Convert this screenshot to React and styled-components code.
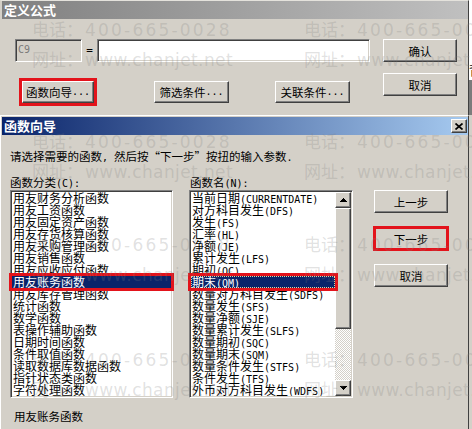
import React from "react";
import styled, { createGlobalStyle, css } from "styled-components";

const CJK = `"Noto Sans CJK SC", "Noto Sans", sans-serif`;
const MONO = `"DejaVu Sans Mono", "Liberation Mono", monospace`;
const FACE = "#d4d0c8";
const NAVY = "#0a246a";
const RED = "#e3131b";

const GlobalStyle = createGlobalStyle`
  html, body { margin: 0; padding: 0; background: ${FACE}; }
  body { font-family: ${CJK}; font-size: 12px; color: #000; }
  * { box-sizing: border-box; }
`;

// classic 3d edges
const raised = css`
  background: ${FACE};
  border: 1px solid;
  border-color: #fff #404040 #404040 #fff;
  box-shadow: inset -1px -1px #808080, inset 1px 1px ${FACE};
`;

const sunken = css`
  border: 1px solid;
  border-color: #808080 #fff #fff #808080;
  box-shadow: inset 1px 1px #404040, inset -1px -1px ${FACE};
  padding: 1px;
`;

const Screen = styled.div`
  position: relative;
  width: 472px;
  height: 429px;
  overflow: hidden;
  display: flex;
  background: ${FACE};
`;

const Stack = styled.div`
  width: 469px;
  flex: none;
  display: flex;
  flex-direction: column;
`;

const Edge = styled.div`
  flex: 1;
  display: flex;
  flex-direction: column;
  overflow: hidden;
`;

const EdgePart = styled.div`
  height: ${({ $h }) => ($h ? `${$h}px` : "auto")};
  flex: ${({ $h }) => ($h ? "none" : 1)};
  background: ${({ $bg }) => $bg};
  font-size: 13px;
  line-height: 20px;
  white-space: nowrap;
`;

const Window = styled.section`
  display: flex;
  flex-direction: column;
  background: ${FACE};
  border-left: 1px solid ${({ $active }) => ($active ? "#fff" : FACE)};
  border-right: 1px solid #404040;
  border-top: 1px solid ${({ $active }) => ($active ? "#fff" : "#e4e2dc")};
  padding: ${({ $active }) => ($active ? "1px" : "0")} 0 0 1px;
  height: ${({ $height }) => ($height ? `${$height}px` : "auto")};
  flex: ${({ $height }) => ($height ? "none" : 1)};
`;

const TitleBar = styled.header`
  height: 18px;
  flex: none;
  display: flex;
  align-items: center;
  justify-content: space-between;
  padding: 0 1px 0 2px;
  background: ${({ $active }) =>
    $active
      ? "linear-gradient(90deg, #0a246a 0%, #a6caf0 100%)"
      : "linear-gradient(90deg, #808080 0%, #c0c0c0 100%)"};
  color: #fff;
  font-weight: bold;
  font-size: 13px;
  line-height: 18px;
`;

const CloseButton = styled.div`
  ${raised}
  width: 16px;
  height: 14px;
  display: flex;
  align-items: center;
  justify-content: center;
`;

const Latin = styled.span`
  font-family: ${MONO};
  font-size: 10px;
`;

const Button = styled.button`
  ${raised}
  width: ${({ $w }) => $w || 74}px;
  height: ${({ $h }) => $h || 23}px;
  margin-left: ${({ $ml }) => $ml || 0}px;
  padding: 0;
  display: flex;
  align-items: center;
  justify-content: center;
  font-family: ${CJK};
  font-size: 11.5px;
  line-height: 12px;
  color: #000;
  white-space: nowrap;
  ${({ $mark }) =>
    $mark !== undefined &&
    css`
      outline: 3px solid ${RED};
      outline-offset: ${$mark}px;
    `}
`;

/* ---------- outer dialog ---------- */

const FormulaBody = styled.div`
  flex: 1;
  display: grid;
  grid-template-columns: 381px 74px;
  padding-top: 20px;
`;

const FormulaLeft = styled.div`
  display: flex;
  flex-direction: column;
  gap: 20px;
  padding-left: 13px;
`;

const FieldRow = styled.div`
  display: flex;
  align-items: center;
  height: 23px;
`;

const Field = styled.div`
  ${sunken}
  width: ${({ $w }) => $w}px;
  height: 23px;
  background: ${({ $disabled }) => ($disabled ? FACE : "#fff")};
  color: #7a7a7a;
  padding: 2px 0 0 2px;
  line-height: 12px;
`;

const Equals = styled(Latin)`
  width: 15px;
  text-align: center;
  font-size: 11px;
`;

const ButtonRow = styled.div`
  display: flex;
  margin-top: -1px;
`;

const ButtonStack = styled.div`
  display: flex;
  flex-direction: column;
  gap: ${({ $gap }) => $gap}px;
  padding-left: ${({ $pad }) => $pad || 0}px;
`;

/* ---------- wizard ---------- */

const WizardBody = styled.div`
  flex: 1;
  padding: 15px 0 0 8px;
  font-size: 11.5px;
`;

const Text = styled.div`
  height: 12px;
  line-height: 12px;
  white-space: nowrap;
  padding-left: ${({ $pad }) => $pad || 0}px;
`;

const Picker = styled.div`
  margin-top: 14px;
  display: grid;
  grid-template-columns: 163px 164px 79px;
  grid-template-rows: 12px 208px;
  column-gap: 16px;
  row-gap: 2px;
  margin-bottom: 12px;
`;

const ListBox = styled.div`
  ${sunken}
  background: #fff;
  display: flex;
  height: 208px;
`;

const Items = styled.div`
  flex: 1;
  min-width: 0;
  clip-path: inset(-4px -4px 0 -4px);
`;

const Row = styled.div`
  height: 12px;
  line-height: 12px;
  padding-left: 1px;
  font-size: 12px;
  white-space: nowrap;
  ${({ $selected }) =>
    $selected &&
    css`
      background: ${NAVY};
      color: #fff;
    `}
  ${({ $focused }) =>
    $focused &&
    css`
      border: 1px dotted #d8d8a8;
      line-height: 10px;
      padding-left: 0;
    `}
  ${({ $marked }) =>
    $marked &&
    css`
      outline: 3px solid ${RED};
    `}
`;

const ScrollBar = styled.div`
  width: 16px;
  flex: none;
  display: flex;
  flex-direction: column;
`;

const ArrowButton = styled.div`
  ${raised}
  height: 16px;
  flex: none;
  display: flex;
  align-items: center;
  justify-content: center;
`;

const Thumb = styled.div`
  ${raised}
  height: ${({ $size }) => $size}px;
  flex: none;
`;

const Track = styled.div`
  flex: 1;
  background: repeating-conic-gradient(#fff 0 25%, ${FACE} 0 50%) 0 0 / 2px 2px;
`;

const RightColumn = styled(ButtonStack)`
  grid-column: 3;
  grid-row: 2;
`;

/* ---------- watermark overlay ---------- */

const Watermark = styled.div`
  position: absolute;
  inset: 0;
  pointer-events: none;
  z-index: 5;
`;

const Mark = styled.div`
  position: absolute;
  left: ${({ $x }) => $x}px;
  top: ${({ $y }) => $y}px;
  color: rgba(126, 126, 126, 0.23);
  font-family: "DejaVu Sans", ${CJK};
  font-size: 17px;
  line-height: 30px;
  white-space: nowrap;
`;

const Spaced = styled.span`
  margin-left: 2px;
  letter-spacing: ${({ $ls }) => $ls}px;
`;

const categories = [
  "用友财务分析函数",
  "用友工资函数",
  "用友固定资产函数",
  "用友存货核算函数",
  "用友采购管理函数",
  "用友销售函数",
  "用友应收应付函数",
  "用友账务函数",
  "用友库存管理函数",
  "统计函数",
  "数学函数",
  "表操作辅助函数",
  "日期时间函数",
  "条件取值函数",
  "读取数据库数据函数",
  "指针状态类函数",
  "字符处理函数",
];

const functions = [
  ["当前日期", "CURRENTDATE"],
  ["对方科目发生", "DFS"],
  ["发生", "FS"],
  ["汇率", "HL"],
  ["净额", "JE"],
  ["累计发生", "LFS"],
  ["期初", "QC"],
  ["期末", "QM"],
  ["数量对方科目发生", "SDFS"],
  ["数量发生", "SFS"],
  ["数量净额", "SJE"],
  ["数量累计发生", "SLFS"],
  ["数量期初", "SQC"],
  ["数量期末", "SQM"],
  ["数量条件发生", "STFS"],
  ["条件发生", "TFS"],
  ["外币对方科目发生", "WDFS"],
  ["外币发生", "WFS"],
];

const Arrow = ({ down }) => (
  <svg width="7" height="4" viewBox="0 0 7 4">
    <path
      d="M3 0h1v1h1v1h1v1h1v1H0V3h1V2h1V1h1z"
      fill="#000"
      transform={down ? "rotate(180 3.5 2)" : undefined}
    />
  </svg>
);

const CloseIcon = () => (
  <svg width="8" height="7" viewBox="0 0 8 7">
    <path d="M0.5 0.5l7 6M7.5 0.5l-7 6" stroke="#000" strokeWidth="1.7" />
  </svg>
);

const marks = [15, 127, 230, 345].flatMap((y) => [
  { x: 32, y },
  { x: 304, y },
]);

export default function App() {
  return (
    <>
      <GlobalStyle />
      <Screen>
        <Stack>
          <Window $height={115}>
            <TitleBar>定义公式</TitleBar>
            <FormulaBody>
              <FormulaLeft>
                <FieldRow>
                  <Field $w={67} $disabled>
                    <Latin>C9</Latin>
                  </Field>
                  <Equals>=</Equals>
                  <Field $w={273} />
                </FieldRow>
                <ButtonRow>
                  <Button $w={72} $h={22} $ml={7} $mark={0}>
                    函数向导<Latin>...</Latin>
                  </Button>
                  <Button $w={75} $h={22} $ml={60}>
                    筛选条件<Latin>...</Latin>
                  </Button>
                  <Button $w={75} $h={22} $ml={46}>
                    关联条件<Latin>...</Latin>
                  </Button>
                </ButtonRow>
              </FormulaLeft>
              <ButtonStack $gap={11}>
                <Button>确认</Button>
                <Button>取消</Button>
              </ButtonStack>
            </FormulaBody>
          </Window>

          <Window $active>
            <TitleBar $active>
              函数向导
              <CloseButton>
                <CloseIcon />
              </CloseButton>
            </TitleBar>
            <WizardBody>
              <Text>
                请选择需要的函数<Latin>, </Latin>然后按“下一步”按扭的输入参数<Latin>.</Latin>
              </Text>
              <Picker>
                <Text>
                  函数分类<Latin>(C):</Latin>
                </Text>
                <Text $pad={1}>
                  函数名<Latin>(N):</Latin>
                </Text>
                <span />
                <ListBox>
                  <Items>
                    {categories.map((name) => (
                      <Row
                        key={name}
                        $selected={name === "用友账务函数"}
                        $marked={name === "用友账务函数"}
                      >
                        {name}
                      </Row>
                    ))}
                  </Items>
                </ListBox>
                <ListBox>
                  <Items>
                    {functions.map(([name, code]) => (
                      <Row
                        key={code}
                        $selected={code === "QM"}
                        $focused={code === "QM"}
                        $marked={code === "QM"}
                      >
                        {name}
                        <Latin>({code})</Latin>
                      </Row>
                    ))}
                  </Items>
                  <ScrollBar>
                    <ArrowButton>
                      <Arrow />
                    </ArrowButton>
                    <Thumb $size={121} />
                    <Track />
                    <ArrowButton>
                      <Arrow down />
                    </ArrowButton>
                  </ScrollBar>
                </ListBox>
                <RightColumn $gap={14} $pad={5}>
                  <Button>上一步</Button>
                  <Button $mark={-2}>下一步</Button>
                  <Button>取消</Button>
                </RightColumn>
              </Picker>
              <Text $pad={4}>用友账务函数</Text>
            </WizardBody>
          </Window>
        </Stack>

        <Edge>
          <EdgePart $h={60} $bg="#fff" />
          <EdgePart $h={20} $bg="#fff">
            背
          </EdgePart>
          <EdgePart $h={35} $bg="#7c7c7c" />
          <EdgePart $bg={FACE} />
        </Edge>

        <Watermark>
          {marks.map(({ x, y }) => (
            <Mark key={`${x}-${y}`} $x={x} $y={y}>
              <div>
                电话：<Spaced $ls={2.2}>400-665-0028</Spaced>
              </div>
              <div>
                网址：<Spaced $ls={0.4}>www.chanjet.net</Spaced>
              </div>
            </Mark>
          ))}
        </Watermark>
      </Screen>
    </>
  );
}
